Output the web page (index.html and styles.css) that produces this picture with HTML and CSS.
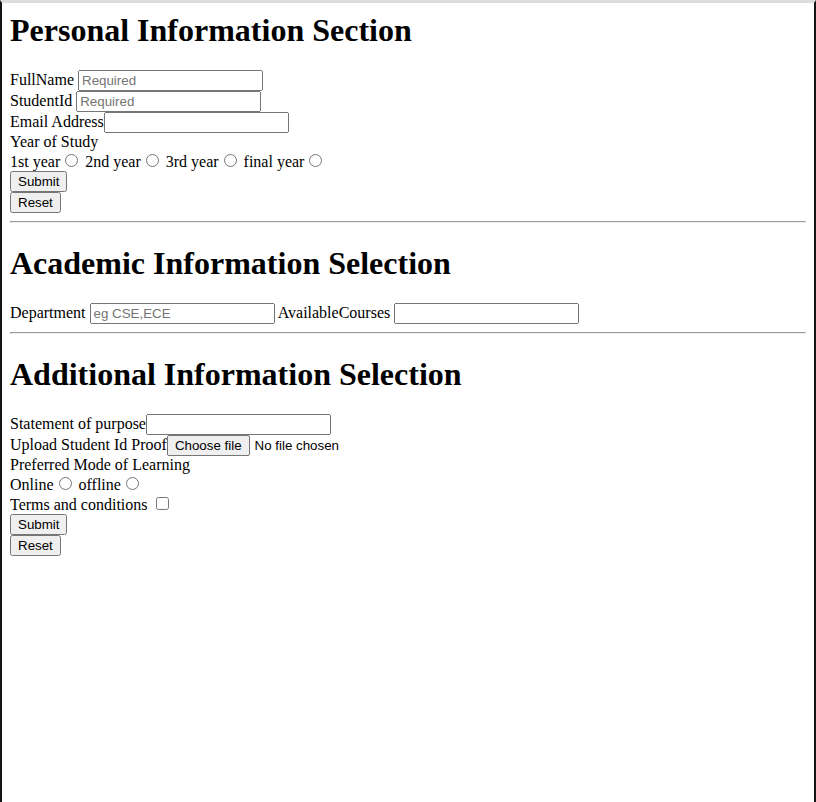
FILE: index.html
```html
<!DOCTYPE html>
<html>
<head>
<meta charset="utf-8">
<title>Student Registration</title>
<link rel="stylesheet" href="styles.css">
</head>
<body>
<div class="frame">
<form class="page">
<h1 class="first">Personal Information Section</h1>
<label>FullName</label> <input type="text" placeholder="Required"><br>
<label>StudentId</label> <input type="text" placeholder="Required"><br>
<label>Email Address</label><input type="email"><br>
<label>Year of Study</label><br>
<label>1st year</label><input type="radio" name="year"> <label>2nd year</label><input type="radio" name="year"> <label>3rd year</label><input type="radio" name="year"> <label>final year</label><input type="radio" name="year"><br>
<input type="submit" value="Submit"><br>
<input type="reset" value="Reset">
<hr>
<h1>Academic Information Selection</h1>
<label>Department</label> <input type="text" placeholder="eg CSE,ECE"> <label>AvailableCourses</label> <input type="text">
<hr>
<h1>Additional Information Selection</h1>
<label>Statement of purpose</label><input type="text"><br>
<label>Upload Student Id Proof</label><label class="file"><input class="file-input" type="file"><span class="file-btn">Choose file</span><span class="file-name">No file chosen</span></label><br>
<label>Preferred Mode of Learning</label><br>
<label>Online</label><input type="radio" name="mode"> <label>offline</label><input type="radio" name="mode"><br>
<label>Terms and conditions</label> <input type="checkbox"><br>
<input type="submit" value="Submit"><br>
<input type="reset" value="Reset">
</form>
</div>
</body>
</html>
```
FILE: styles.css
```css
html, body {
  margin: 0;
  padding: 0;
  background: #ffffff;
}
.frame {
  box-sizing: border-box;
  min-height: 802px;
  border-left: 2px solid #141414;
  border-right: 2px solid #141414;
  border-top: 3px solid #dcdcdc;
  padding: 9px 8px 8px;
  font-family: "Liberation Serif", "Times New Roman", serif;
  font-size: 16px;
  color: #000;
}
.page {
  margin: 0;
}
.page h1 {
  font-size: 32px;
  font-weight: bold;
  margin: 21.44px 0;
}
.page h1.first {
  margin-top: 0;
}
.page input[type="text"],
.page input[type="email"],
.page input[type="submit"],
.page input[type="reset"] {
  font-family: "Liberation Sans", Arial, sans-serif;
  font-size: 13.333px;
}
.page hr {
  margin: 8px 0;
}
.file {
  font-family: "Liberation Sans", Arial, sans-serif;
  font-size: 13.333px;
}
.file-input {
  display: none;
}
.file-btn {
  display: inline-block;
  background: #efefef;
  border: 1px solid #767676;
  border-radius: 2px;
  padding: 2px 7px;
  margin-right: 5px;
  color: #000;
  line-height: 15px;
}
.file-name {
  color: #000;
}
```
